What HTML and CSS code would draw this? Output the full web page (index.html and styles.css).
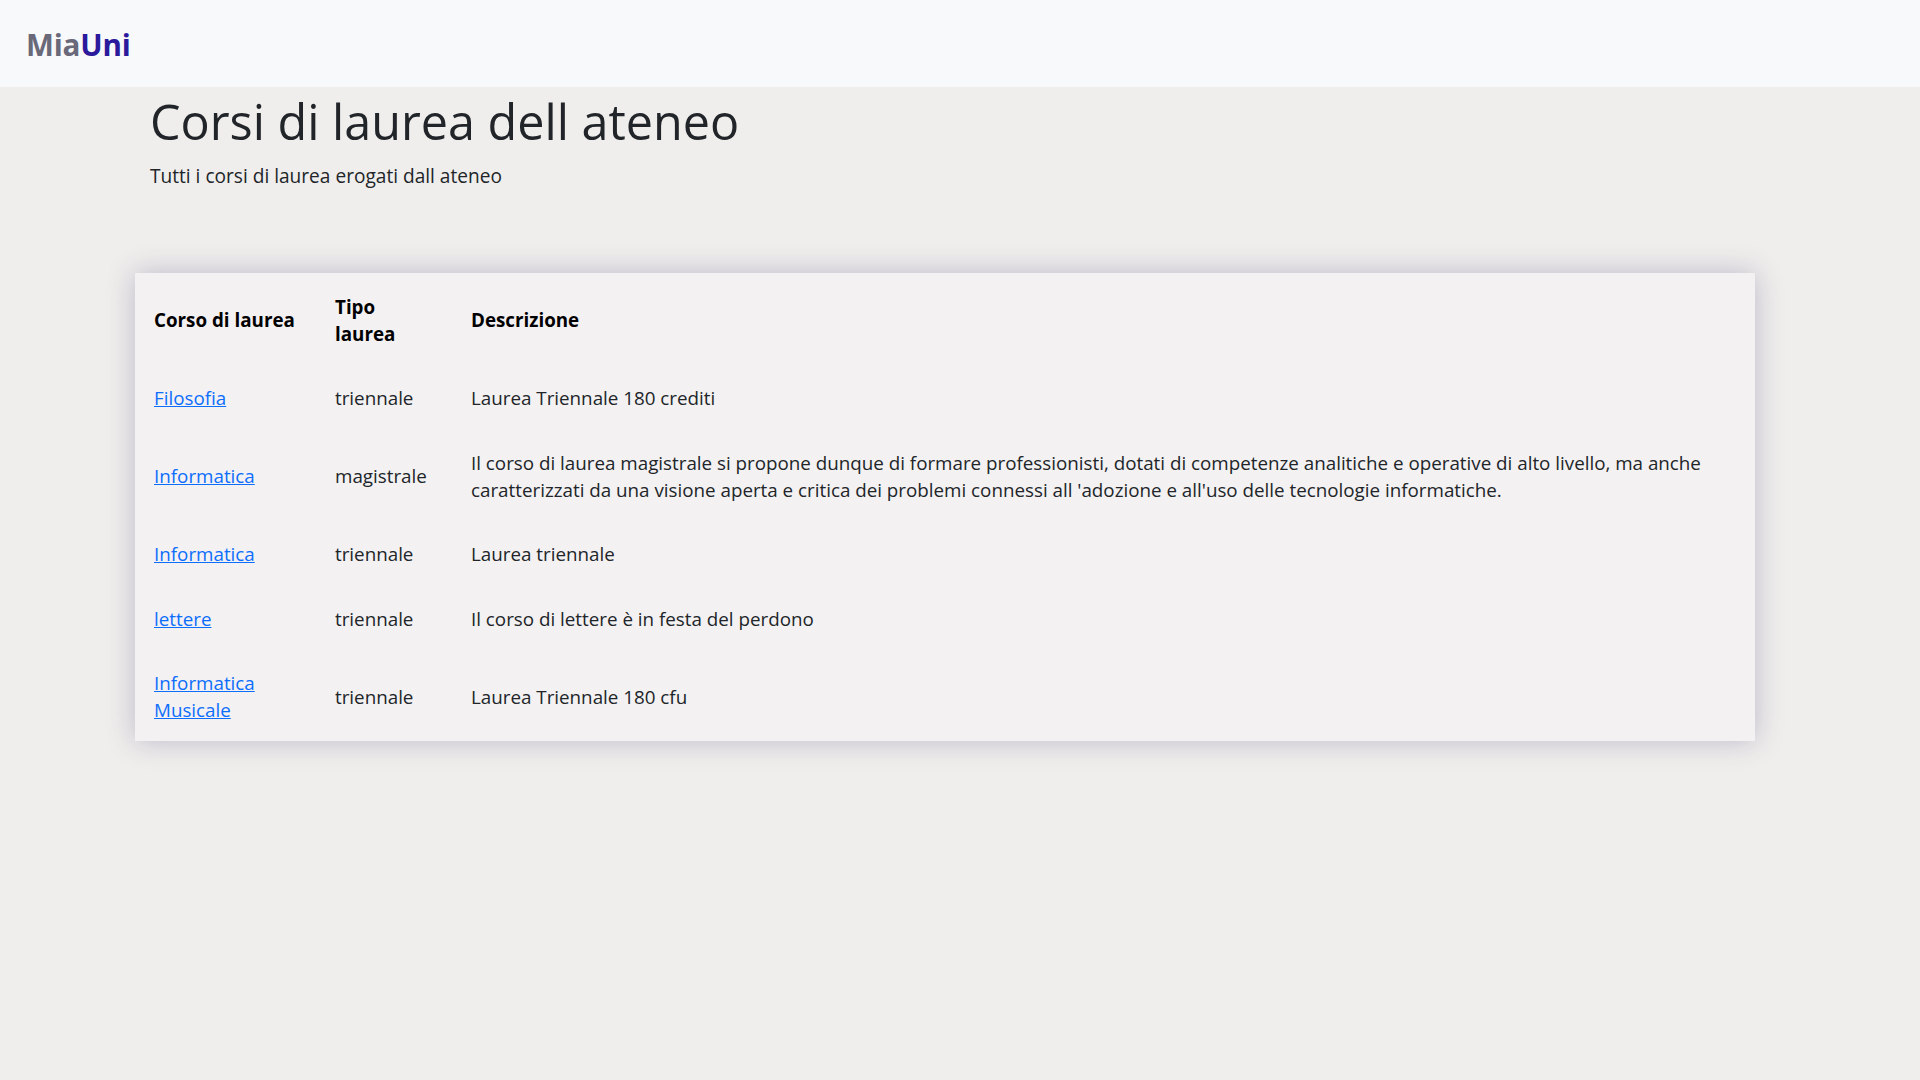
FILE: index.html
```html
<!DOCTYPE html>
<html lang="it">
<head>
<meta charset="utf-8">
<title>MiaUni - Corsi di laurea</title>
<link rel="stylesheet" href="styles.css">
</head>
<body>
<nav class="navbar">
  <a class="brand" href="#"><span class="brand-mia">Mia</span><span class="brand-uni">Uni</span></a>
</nav>
<main class="page">
  <header class="intro">
    <h1 class="title">Corsi di laurea dell ateneo</h1>
    <p class="subtitle">Tutti i corsi di laurea erogati dall ateneo</p>
  </header>
  <section class="card">
    <table class="courses">
      <colgroup>
        <col class="col-name">
        <col class="col-type">
        <col class="col-desc">
      </colgroup>
      <thead>
        <tr>
          <th>Corso di laurea</th>
          <th>Tipo laurea</th>
          <th>Descrizione</th>
        </tr>
      </thead>
      <tbody>
        <tr>
          <td><a href="#">Filosofia</a></td>
          <td>triennale</td>
          <td>Laurea Triennale 180 crediti</td>
        </tr>
        <tr>
          <td><a href="#">Informatica</a></td>
          <td>magistrale</td>
          <td>Il corso di laurea magistrale si propone dunque di formare professionisti, dotati di competenze analitiche e operative di alto livello, ma anche caratterizzati da una visione aperta e critica dei problemi connessi all 'adozione e all'uso delle tecnologie informatiche.</td>
        </tr>
        <tr>
          <td><a href="#">Informatica</a></td>
          <td>triennale</td>
          <td>Laurea triennale</td>
        </tr>
        <tr>
          <td><a href="#">lettere</a></td>
          <td>triennale</td>
          <td>Il corso di lettere è in festa del perdono</td>
        </tr>
        <tr>
          <td><a href="#">Informatica Musicale</a></td>
          <td>triennale</td>
          <td>Laurea Triennale 180 cfu</td>
        </tr>
      </tbody>
    </table>
  </section>
</main>
</body>
</html>
```
FILE: styles.css
```css
* { box-sizing: border-box; }

html, body {
  margin: 0;
  padding: 0;
}

body {
  background: #efeeec;
  color: #212529;
  font-family: "Open Sans", "Noto Sans", sans-serif;
  font-size: 18.8px;
  line-height: 1.5;
  min-height: 1080px;
}

.navbar {
  height: 87px;
  background: #f8f9fa;
  display: flex;
  align-items: center;
  padding: 3px 0 0 26px;
}

.brand {
  text-decoration: none;
  font-weight: 700;
  font-size: 29.6px;
  line-height: 1;
  letter-spacing: -0.2px;
}

.brand-mia { color: #6a6979; }
.brand-uni { color: #2c1a9c; }

.page {
  padding: 0 0 0 150px;
}

.intro {
  padding-top: 5px;
}

.title {
  margin: 0;
  font-size: 48.5px;
  font-weight: 500;
  line-height: 1.2;
  color: #212529;
}

.subtitle {
  margin: 12px 0 0;
  font-size: 19.1px;
  line-height: 28px;
  color: #212529;
}

.card {
  width: 1620px;
  margin: 83px 0 0 -15px;
  background: #f3f1f2;
  box-shadow: 0 0 26px rgba(60, 50, 110, 0.28);
}

.courses {
  width: 100%;
  border-collapse: collapse;
  table-layout: fixed;
}

.col-name { width: 181px; }
.col-type { width: 136px; }

.courses th,
.courses td {
  padding: 20.5px 19px 17px 19px;
  line-height: 27px;
  text-align: left;
  vertical-align: middle;
}

.courses td:nth-child(2),
.courses th:nth-child(2) {
  padding-right: 22px;
}

.courses th {
  font-weight: 700;
  color: #000;
}

.courses td {
  color: #212529;
}

.courses a {
  color: #0d6efd;
  text-decoration: underline;
}
```
